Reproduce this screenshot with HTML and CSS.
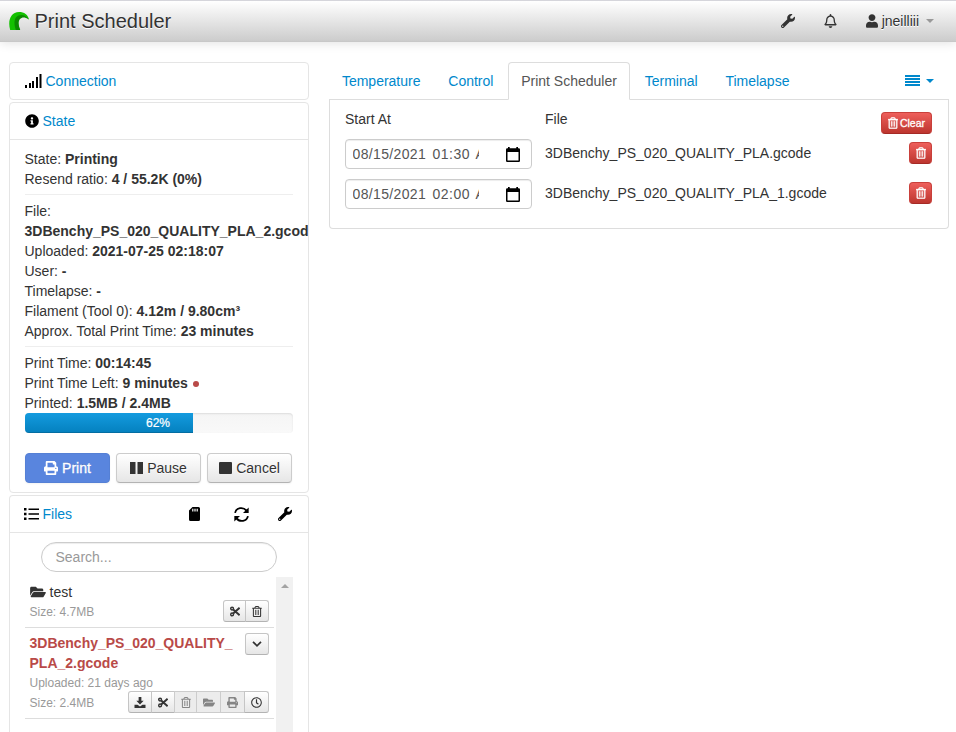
FILE: index.html
```html
<!DOCTYPE html>
<html lang="en">
<head>
<meta charset="utf-8">
<title>Print Scheduler</title>
<link rel="stylesheet" href="styles.css">
</head>
<body>
<svg class="sprite" aria-hidden="true">
  <symbol id="trash" viewBox="0 0 448 512"><path d="M268 416h24a12 12 0 0 0 12-12V188a12 12 0 0 0-12-12h-24a12 12 0 0 0-12 12v216a12 12 0 0 0 12 12zM432 80h-82.41l-34-56.7A48 48 0 0 0 274.41 0H173.59a48 48 0 0 0-41.16 23.3L98.41 80H16A16 16 0 0 0 0 96v16a16 16 0 0 0 16 16h16v336a48 48 0 0 0 48 48h288a48 48 0 0 0 48-48V128h16a16 16 0 0 0 16-16V96a16 16 0 0 0-16-16zM171.84 50.91A6 6 0 0 1 177 48h94a6 6 0 0 1 5.15 2.91L293.61 80H154.39zM368 464H80V128h288zm-212-48h24a12 12 0 0 0 12-12V188a12 12 0 0 0-12-12h-24a12 12 0 0 0-12 12v216a12 12 0 0 0 12 12z"/></symbol>
  <symbol id="user" viewBox="0 0 448 512"><path d="M224 256c70.7 0 128-57.3 128-128S294.7 0 224 0 96 57.3 96 128s57.3 128 128 128zm89.6 32h-16.7c-22.2 10.2-46.9 16-72.9 16s-50.6-5.8-72.9-16h-16.7C60.2 288 0 348.2 0 422.4V464c0 26.5 21.5 48 48 48h352c26.5 0 48-21.5 48-48v-41.6c0-74.2-60.2-134.4-134.4-134.4z"/></symbol>
  <symbol id="wrench" viewBox="0 0 512 512"><path d="M507.73 109.1c-2.24-9.03-13.54-12.09-20.12-5.51l-74.36 74.36-67.88-11.31-11.31-67.88 74.36-74.36c6.62-6.62 3.43-17.9-5.66-20.16-47.38-11.74-99.55.91-136.58 37.93-39.64 39.64-50.55 97.1-34.05 147.2L18.74 402.76c-24.99 24.99-24.99 65.51 0 90.5 24.99 24.99 65.51 24.99 90.5 0l213.21-213.21c50.12 16.71 107.47 5.68 147.37-34.22 37.07-37.07 49.7-89.32 37.91-136.73zM64 472c-13.25 0-24-10.75-24-24 0-13.26 10.75-24 24-24s24 10.74 24 24c0 13.25-10.75 24-24 24z"/></symbol>
  <symbol id="bell" viewBox="0 0 448 512"><path d="M439.39 362.29c-19.32-20.76-55.47-51.99-55.47-154.29 0-77.7-54.48-139.9-127.94-155.16V32c0-17.67-14.32-32-31.98-32s-31.98 14.33-31.98 32v20.84C118.56 68.1 64.08 130.3 64.08 208c0 102.3-36.15 133.53-55.47 154.29-6 6.45-8.66 14.16-8.61 21.71.11 16.4 12.98 32 32.1 32h383.8c19.12 0 32-15.6 32.1-32 .05-7.55-2.61-15.27-8.61-21.71zM67.53 368c21.22-27.97 44.42-74.33 44.53-159.42 0-.2-.06-.38-.06-.58 0-61.86 50.14-112 112-112s112 50.14 112 112c0 .2-.06.38-.06.58.11 85.1 23.31 131.46 44.53 159.42H67.53zM224 512c35.32 0 63.97-28.65 63.97-64H160.03c0 35.35 28.65 64 63.97 64z"/></symbol>
  <symbol id="info" viewBox="0 0 512 512"><path d="M256 8C119.043 8 8 119.083 8 256c0 136.997 111.043 248 248 248s248-111.003 248-248C504 119.083 392.957 8 256 8zm0 110c23.196 0 42 18.804 42 42s-18.804 42-42 42-42-18.804-42-42 18.804-42 42-42zm56 254c0 6.627-5.373 12-12 12h-88c-6.627 0-12-5.373-12-12v-24c0-6.627 5.373-12 12-12h12v-64h-12c-6.627 0-12-5.373-12-12v-24c0-6.627 5.373-12 12-12h64c6.627 0 12 5.373 12 12v100h12c6.627 0 12 5.373 12 12v24z"/></symbol>
  <symbol id="print" viewBox="0 0 512 512"><path d="M448 192V77.25c0-8.49-3.37-16.62-9.37-22.63L393.37 9.37c-6-6-14.14-9.37-22.63-9.37H96C78.33 0 64 14.33 64 32v160c-35.35 0-64 28.65-64 64v112c0 8.84 7.16 16 16 16h48v96c0 17.67 14.33 32 32 32h320c17.67 0 32-14.33 32-32v-96h48c8.84 0 16-7.16 16-16V256c0-35.35-28.65-64-64-64zm-64 256H128v-96h256v96zm0-224H128V64h192v48c0 8.84 7.16 16 16 16h48v96zm48 72c-13.25 0-24-10.75-24-24 0-13.26 10.75-24 24-24s24 10.74 24 24c0 13.25-10.75 24-24 24z"/></symbol>
  <symbol id="folder" viewBox="0 0 576 512"><path d="M572.694 292.093L500.27 416.248A63.997 63.997 0 0 1 444.989 448H45.025c-18.523 0-30.064-20.093-20.731-36.093l72.424-124.155A64 64 0 0 1 152 256h399.964c18.523 0 30.064 20.093 20.73 36.093zM152 224h328v-48c0-26.51-21.49-48-48-48H272l-64-64H48C21.49 64 0 85.49 0 112v278.046l69.077-118.418C86.214 242.25 117.989 224 152 224z"/></symbol>
  <symbol id="clock" viewBox="0 0 512 512"><path d="M256 8C119 8 8 119 8 256s111 248 248 248 248-111 248-248S393 8 256 8zm0 448c-110.5 0-200-89.5-200-200S145.5 56 256 56s200 89.5 200 200-89.5 200-200 200zm61.8-104.4l-84.9-61.7c-3.1-2.3-4.9-5.9-4.9-9.7V116c0-6.6 5.4-12 12-12h32c6.6 0 12 5.4 12 12v141.7l66.8 48.6c5.4 3.9 6.5 11.4 2.6 16.8L334.6 349c-3.9 5.3-11.4 6.5-16.8 2.6z"/></symbol>
  <symbol id="sdcard" viewBox="0 0 11 14"><path fill-rule="evenodd" d="M3.500 0H9.500A1.500 1.500 0 0 1 11 1.500v11A1.500 1.500 0 0 1 9.500 14h-8A1.500 1.500 0 0 1 0 12.500V3.500zM3.200 1.800v2.600h1.200V1.800zM5.400 1.800v2.600h1.200V1.800zM7.600 1.800v2.600h1.200V1.800z"/></symbol>
  <symbol id="cut" viewBox="0 0 10 11"><g fill="none" stroke="currentColor"><circle cx="2.1" cy="2.6" r="1.4" stroke-width="1.4"/><circle cx="2.1" cy="8.4" r="1.4" stroke-width="1.4"/><path stroke-width="1.9" d="M3.2 3.5 9.6 9.2M3.2 7.5 9.6 1.8"/></g></symbol>
  <symbol id="download" viewBox="0 0 12 12"><path d="M4.500 0h3v4H10L6 8.200 2 4h2.500zM0 8.500h3.300L6 10.300l2.700-1.800H12V12H0z"/></symbol>
  <symbol id="refresh" viewBox="0 0 14 14"><path fill="none" stroke="currentColor" stroke-width="1.700" d="M1 5.500C2 .6 8.600-.7 11.800 3.600M13 8.500C12 13.400 5.400 14.700 2.200 10.400"/><path d="M13.700.4V5.700H8.400zM.3 13.600V8.300h5.300z"/></symbol>
  <symbol id="calendar" viewBox="0 0 14 15"><path d="M2 0h1.700v1.300h6.600V0H12v1.300h.8A1.200 1.200 0 0 1 14 2.500v11.300a1.200 1.200 0 0 1-1.200 1.200H1.200A1.200 1.200 0 0 1 0 13.800V2.500a1.200 1.200 0 0 1 1.200-1.200H2zM1.500 5v8.500h11V5z"/></symbol>
</svg>

<header class="navbar">
  <a class="brand"><svg class="logo" viewBox="0 0 20 18"><path fill="#13c100" d="M1.200 18C-1.500 9 1.500 0 10 0c5 0 9.300 2.600 10 7.800C17.500 5 14 4 11.500 5.500 8.500 7.500 8.500 12 11.200 18z"/><path fill="#0b8a00" d="M11.200 18H6.800C4.500 11 5.200 5.500 9.500 3.600c3.800-1.600 8.200.1 10.200 3.700-3.500-2.400-6.700-2.500-8.700-.3-2.200 2.500-1.400 6.500.2 11z"/></svg>Print Scheduler</a>
  <nav class="nav-right">
    <svg class="ic14 nav-wrench"><use href="#wrench"/></svg>
    <svg class="ic12 nav-bell"><use href="#bell"/></svg>
    <svg class="ic12 nav-user"><use href="#user"/></svg>
    <span>jneilliii</span><i class="caret gray"></i>
  </nav>
</header>

<div class="page">
  <aside class="sidebar">
    <section class="box">
      <h2 class="heading"><svg class="signal" viewBox="0 0 17 14"><path d="M0 11h2v3H0zM4 9h2v5H4zM7 7h2v7H7zM11 3h2v11h-2zM14.500 0h2v14h-2z"/></svg><a>Connection</a></h2>
    </section>
    <section class="box">
      <h2 class="heading ruled"><svg class="ic14"><use href="#info"/></svg><a>State</a></h2>
      <div class="state">
        <div>State: <b>Printing</b></div>
        <div>Resend ratio: <b>4 / 55.2K (0%)</b></div>
        <hr>
        <div>File:</div>
        <div><b>3DBenchy_PS_020_QUALITY_PLA_2.gcode</b></div>
        <div>Uploaded: <b>2021-07-25 02:18:07</b></div>
        <div>User: <b>-</b></div>
        <div>Timelapse: <b>-</b></div>
        <div>Filament (Tool 0): <b>4.12m / 9.80cm³</b></div>
        <div>Approx. Total Print Time: <b>23 minutes</b></div>
        <hr>
        <div>Print Time: <b>00:14:45</b></div>
        <div>Print Time Left: <b>9 minutes</b> <i class="dot"></i></div>
        <div>Printed: <b>1.5MB / 2.4MB</b></div>
        <div class="progress"><div class="bar" style="width:62.6%">62%</div></div>
        <div class="actions">
          <button class="btn primary"><svg class="ic14"><use href="#print"/></svg>Print</button>
          <button class="btn"><svg class="sq" viewBox="0 0 13 12"><path d="M0 0h5.500v12H0zM7.500 0H13v12H7.500z"/></svg>Pause</button>
          <button class="btn"><svg class="sq" viewBox="0 0 13 12"><rect width="13" height="12" rx="1"/></svg>Cancel</button>
        </div>
      </div>
    </section>
    <section class="box files">
      <h2 class="heading ruled"><svg class="list-ic" viewBox="0 0 15 12"><path d="M0 0h2.500v2.500H0zM0 4.700h2.500v2.500H0zM0 9.400h2.500v2.500H0zM4.500.5H15v1.500H4.500zM4.500 5.200H15v1.500H4.500zM4.500 10H15v1.500H4.500z"/></svg><a>Files</a>
        <span class="tools"><svg class="sd"><use href="#sdcard"/></svg><svg class="ic15"><use href="#refresh"/></svg><svg class="ic14"><use href="#wrench"/></svg></span></h2>
      <div class="search">Search...</div>
      <div class="scroller">
        <div class="entries">
          <div class="entry">
            <div class="folder-name"><svg class="folder-ic"><use href="#folder"/></svg>test</div>
            <div class="meta">Size: 4.7MB
              <div class="group"><button class="mini w23"><svg class="cut"><use href="#cut"/></svg></button><button class="mini w24"><svg class="bin"><use href="#trash"/></svg></button></div>
            </div>
          </div>
          <div class="entry">
            <div class="title-row"><b>3DBenchy_PS_020_QUALITY_<br>PLA_2.gcode</b><button class="mini w24 round"><svg class="chev" viewBox="0 0 10 6"><path d="M1 .8 5 4.800 9 .8" fill="none" stroke="currentColor" stroke-width="1.700"/></svg></button></div>
            <div class="meta">Uploaded: 21 days ago</div>
            <div class="meta">Size: 2.4MB
              <div class="group"><button class="mini w24"><svg class="dl"><use href="#download"/></svg></button><button class="mini w24"><svg class="cut"><use href="#cut"/></svg></button><button class="mini w23 off"><svg class="bin"><use href="#trash"/></svg></button><button class="mini w25 off"><svg class="fold"><use href="#folder"/></svg></button><button class="mini w25 off"><svg class="pr"><use href="#print"/></svg></button><button class="mini w25"><svg class="pr"><use href="#clock"/></svg></button></div>
            </div>
          </div>
        </div>
        <div class="track"><i></i></div>
      </div>
    </section>
  </aside>

  <main class="main">
    <nav class="tabs">
      <a>Temperature</a><a>Control</a><a class="active">Print Scheduler</a><a>Terminal</a><a>Timelapse</a>
      <span class="menu"><svg viewBox="0 0 15 12"><path d="M0 0h15v2H0zM0 3h15v2H0zM0 6h15v2H0zM0 9h15v2H0z"/></svg><i class="caret"></i></span>
    </nav>
    <div class="pane">
      <div class="row first"><span class="start">Start At</span><span class="name">File</span><button class="danger clear"><svg><use href="#trash"/></svg>Clear</button></div>
      <div class="row"><div class="date start"><div class="fields"><span>08/15/2021</span><span class="time">01:30</span><span>AM</span></div><svg><use href="#calendar"/></svg></div><span class="name">3DBenchy_PS_020_QUALITY_PLA.gcode</span><button class="danger"><svg><use href="#trash"/></svg></button></div>
      <div class="row"><div class="date start"><div class="fields"><span>08/15/2021</span><span class="time">02:00</span><span>AM</span></div><svg><use href="#calendar"/></svg></div><span class="name">3DBenchy_PS_020_QUALITY_PLA_1.gcode</span><button class="danger"><svg><use href="#trash"/></svg></button></div>
    </div>
  </main>
</div>
</body>
</html>
```
FILE: styles.css
```css
* { box-sizing: border-box; }
html, body { height: 732px; overflow: hidden; }
body { margin: 0; background: #fff; color: #333; font: 14px/20px "Liberation Sans", Arial, sans-serif; }
svg { fill: currentColor; flex: none; display: block; }
button { font: inherit; margin: 0; color: #333; }
a { color: #08c; }
.sprite { display: none; }
.ic14 { width: 14px; height: 14px; }
.ic15 { width: 15px; height: 15px; }
.ic12 { width: 12px; height: 14px; }
.caret { width: 0; height: 0; border: 4px solid transparent; border-top-color: currentColor; border-bottom: 0; }
.caret.gray { color: #999; }

.navbar { height: 42px; padding: 0 22px 0 9px; display: flex; justify-content: space-between; align-items: center; border-top: 1px solid #d5d5db; border-bottom: 1px solid #c8c8c8; background: linear-gradient(#fff, #ccc); box-shadow: 0 1px 10px rgba(0,0,0,.12); }
.brand { display: flex; align-items: center; font-size: 20px; color: #333; text-shadow: 0 1px 0 #fff; }
.logo { width: 20px; height: 18px; margin-right: 5.5px; }
.nav-right { display: flex; align-items: center; text-shadow: 0 1px 0 #fff; }
.nav-wrench { margin-right: 29px; }
.nav-bell { width: 13px; margin-right: 29px; }
.nav-user { margin-right: 4px; }
.nav-right .caret { margin-left: 7px; }

.page { display: flex; gap: 20px; padding: 20px 7px 0 9px; }
.sidebar { width: 300px; flex: none; }
.box { border: 1px solid #e5e5e5; border-radius: 4px; margin-bottom: 2px; overflow: hidden; }
.heading { margin: 0; height: 36px; padding: 0 15px; display: flex; align-items: center; gap: 4px; font-size: 14px; font-weight: 400; color: #000; }
.heading a { margin-left: -.5px; }
.ruled { height: 37px; border-bottom: 1px solid #e5e5e5; }
.signal { width: 17px; height: 14px; }
.state { padding: 9px 15px; white-space: nowrap; }
.state > div:not(.progress):not(.actions) { margin-left: -.5px; }
hr { margin: 5px 0; border: 0; border-top: 1px solid #eee; border-bottom: 1px solid #fff; }
.dot { display: inline-block; width: 6px; height: 6px; margin-left: 1px; border-radius: 50%; background: #b94a48; vertical-align: 1px; }
.progress { height: 20px; border-radius: 4px; overflow: hidden; background: linear-gradient(#f5f5f5, #f9f9f9); box-shadow: inset 0 1px 2px rgba(0,0,0,.1); }
.bar { height: 20px; padding-left: 121px; font-size: 12px; color: #fff; -webkit-text-stroke: .2px #fff; background: linear-gradient(#149bdf, #0480be); box-shadow: inset 0 -1px 0 rgba(0,0,0,.15); }
.actions { display: flex; gap: 6px; margin-top: 20px; }
.btn { width: 85px; height: 30px; padding: 0; display: flex; justify-content: center; align-items: center; gap: 4px; border: 1px solid #ccc; border-bottom-color: #b3b3b3; border-radius: 4px; background: linear-gradient(#fff, #e6e6e6); text-shadow: 0 1px 1px rgba(255,255,255,.75); box-shadow: 0 1px 2px rgba(0,0,0,.05); }
.btn.primary { color: #fff; background: #5985de; border-color: #5580d5; -webkit-text-stroke: .3px #fff; text-shadow: 0 -1px 0 rgba(0,0,0,.15); }
.sq { width: 13px; height: 12px; }

.files { height: 260px; border-bottom: 0; border-radius: 4px 4px 0 0; margin: 0; }
.list-ic { width: 15px; height: 12px; margin-left: -1px; }
.tools { margin-left: auto; display: flex; align-items: center; }
.sd { width: 11px; height: 14px; margin-right: 34px; }
.tools .ic15 { margin-right: 29px; }
.tools { margin-right: 1px; }
.search { width: 236px; height: 30px; margin: 9px 0 5px 31px; padding: 4px 13.5px; border: 1px solid #ccc; border-radius: 15px; color: #999; box-shadow: inset 0 1px 1px rgba(0,0,0,.075); }
.scroller { display: flex; height: 200px; padding: 0 15px; justify-content: space-between; }
.entries { width: 249px; }
.entry { padding: 5px 5px 5px 4.5px; border-bottom: 1px solid #ddd; }
.folder-name { display: flex; align-items: center; gap: 4px; }
.folder-ic { width: 16px; height: 14px; }
.meta { display: flex; align-items: center; justify-content: space-between; height: 20px; font-size: 12px; color: #999; }
.group { display: flex; margin-top: -2px; }
.title-row { display: flex; justify-content: space-between; color: #b94a48; }
.mini { height: 22px; padding: 0; display: flex; align-items: center; justify-content: center; border: 1px solid #c5c5c5; border-bottom-color: #b3b3b3; background: linear-gradient(#fff, #e6e6e6); }
.mini + .mini { margin-left: -1px; }
.mini:first-child, .round { border-top-left-radius: 3px; border-bottom-left-radius: 3px; }
.mini:last-child { border-top-right-radius: 3px; border-bottom-right-radius: 3px; }
.w23 { width: 23px; }
.w24 { width: 24px; }
.w25 { width: 25px; }
.off { background: #ececec; color: #858585; border-color: #ccc; }
.cut { width: 10px; height: 11px; }
.bin { width: 10px; height: 11px; }
.dl { width: 12px; height: 11px; }
.fold { width: 12px; height: 11px; }
.pr { width: 11px; height: 11px; }
.chev { width: 10px; height: 6px; }
.track { width: 17px; background: #f1f1f1; display: flex; justify-content: center; align-items: flex-start; }
.track i { margin-top: 7px; border: 4px solid transparent; border-top: 0; border-bottom-color: #a3a3a3; }

.main { width: 620px; }
.tabs { display: flex; height: 38px; border-bottom: 1px solid #ddd; }
.tabs a { height: 38px; margin-right: 2px; padding: 8px 11.9px; border: 1px solid transparent; border-radius: 4px 4px 0 0; }
.tabs .active { color: #555; background: #fff; border-color: #ddd; border-bottom-color: #fff; }
.menu { margin-left: auto; padding-right: 15px; display: flex; align-items: center; gap: 6px; color: #08c; }
.menu svg { width: 15px; height: 12px; }
.pane { height: 129px; padding: 9px 16px 0 15px; border: 1px solid #ddd; border-top: 0; border-radius: 0 0 4px 4px; }
.row { height: 40px; display: flex; align-items: flex-start; }
.row.first { height: 30px; }
.start { width: 187px; margin-right: 13px; }
.name { flex: 1; margin-top: 4px; }
.first .name { margin-top: 0; }
.date { height: 30px; padding: 0 11px 0 6.5px; display: flex; align-items: center; justify-content: space-between; border: 1px solid #ccc; border-radius: 4px; color: #555; box-shadow: inset 0 1px 1px rgba(0,0,0,.075); }
.fields { width: 126px; display: flex; overflow: hidden; white-space: nowrap; letter-spacing: .35px; }
.fields .time { margin: 0 5.5px 0 6.500px; letter-spacing: .45px; }
.date svg { width: 14px; height: 15px; color: #000; }
.danger { height: 22px; min-width: 23px; margin-top: 3px; padding: 0 5px; display: flex; align-items: center; justify-content: center; gap: 2px; color: #fff; font-size: 10.5px; -webkit-text-stroke: .3px #fff; border: 1px solid #c9403b; border-bottom-color: #a52a25; border-radius: 4px; background: linear-gradient(#ee5f5b, #bd362f); }
.danger svg { width: 10px; height: 12px; stroke: #fff; stroke-width: 14; }
.clear { width: 51px; }
```
